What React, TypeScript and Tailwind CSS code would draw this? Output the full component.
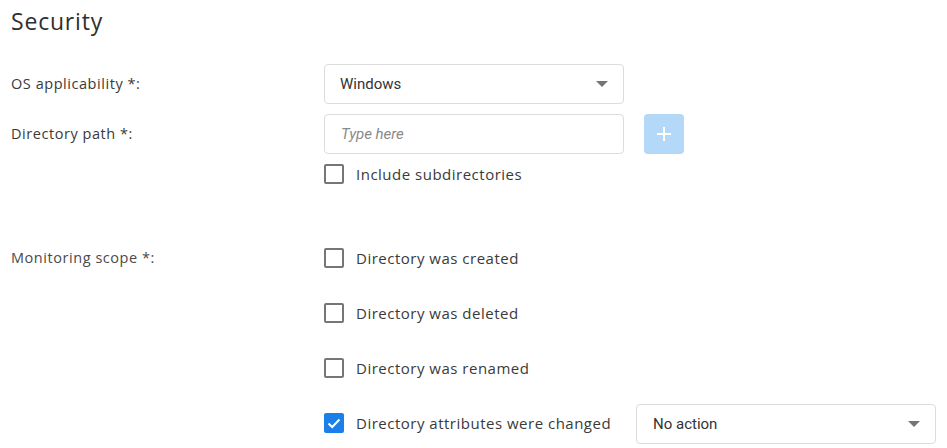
import React from "react";

const Arrow = () => (
  <svg width="12" height="6" viewBox="0 0 12 6" className="shrink-0">
    <path d="M0 0 L12 0 L6 6 Z" fill="#757575" />
  </svg>
);

const Checkbox = ({ checked = false }: { checked?: boolean }) =>
  checked ? (
    <div className="w-[20px] h-[20px] rounded-[2px] bg-[#1a7fe8] flex items-center justify-center shrink-0">
      <svg width="14" height="11" viewBox="0 0 14 11">
        <path d="M1.5 5.5 L5.2 9 L12.5 1.5" fill="none" stroke="white" strokeWidth="2" />
      </svg>
    </div>
  ) : (
    <div className="w-[20px] h-[20px] rounded-[2px] border-2 border-[#767676] bg-white shrink-0" />
  );

const CheckRow = ({ label, checked = false }: { label: string; checked?: boolean }) => (
  <div className="flex items-center gap-[12px] h-[20px] w-[290px]">
    <Checkbox checked={checked} />
    <span className="text-[15px] text-[#3a3a3a] tracking-[0.5px] whitespace-nowrap">{label}</span>
  </div>
);

export default function App() {
  return (
    <div className="w-[947px] h-[448px] overflow-hidden bg-white pl-[11px] pt-[6px]" style={{ fontFamily: '"Open Sans", sans-serif' }}>
      <h1 className="text-[23px] leading-[30px] text-[#2f2f2f] font-normal tracking-[0.8px]">Security</h1>
      <div className="mt-[28px] flex flex-col">
        <div className="flex items-center h-[40px]">
          <div className="w-[313px] text-[14.5px] text-[#3a3a3a] tracking-[0.55px]">OS applicability *:</div>
          <div className="w-[300px] h-[40px] border border-[#dcdcdc] rounded-[4px] flex items-center justify-between pl-[15px] pr-[15px]" style={{ fontFamily: "Roboto, sans-serif" }}>
            <span className="text-[15px] text-[#333]">Windows</span>
            <Arrow />
          </div>
        </div>
        <div className="flex items-center h-[40px] mt-[10px]">
          <div className="w-[313px] text-[14.5px] text-[#3a3a3a] tracking-[0.55px]">Directory path *:</div>
          <div className="w-[300px] h-[40px] border border-[#dcdcdc] rounded-[4px] flex items-center pl-[16px]" style={{ fontFamily: "Roboto, sans-serif" }}>
            <span className="text-[15px] text-[#8a8a8a] italic">Type here</span>
          </div>
          <div className="ml-[20px] w-[40px] h-[40px] rounded-[4px] bg-[#b4d8f8] flex items-center justify-center">
            <svg width="16" height="16" viewBox="0 0 16 16">
              <path d="M8 1 V15 M1 8 H15" stroke="white" strokeWidth="2" />
            </svg>
          </div>
        </div>
        <div className="flex mt-[10px]">
          <div className="w-[313px]" />
          <CheckRow label="Include subdirectories" />
        </div>
        <div className="flex mt-[64px]">
          <div className="w-[313px] h-[20px] flex items-center text-[14.5px] text-[#4a4a4a] tracking-[0.55px]">Monitoring scope *:</div>
          <div className="flex flex-col gap-[35px]">
            <CheckRow label="Directory was created" />
            <CheckRow label="Directory was deleted" />
            <CheckRow label="Directory was renamed" />
            <div className="flex items-center gap-[22px] h-[20px]">
              <CheckRow label="Directory attributes were changed" checked />
              <div className="w-[300px] h-[40px] border border-[#dcdcdc] rounded-[4px] flex items-center justify-between pl-[16px] pr-[15px] mt-[2px] bg-white shrink-0" style={{ fontFamily: "Roboto, sans-serif" }}>
                <span className="text-[15px] text-[#333]">No action</span>
                <Arrow />
              </div>
            </div>
          </div>
        </div>
      </div>
    </div>
  );
}
